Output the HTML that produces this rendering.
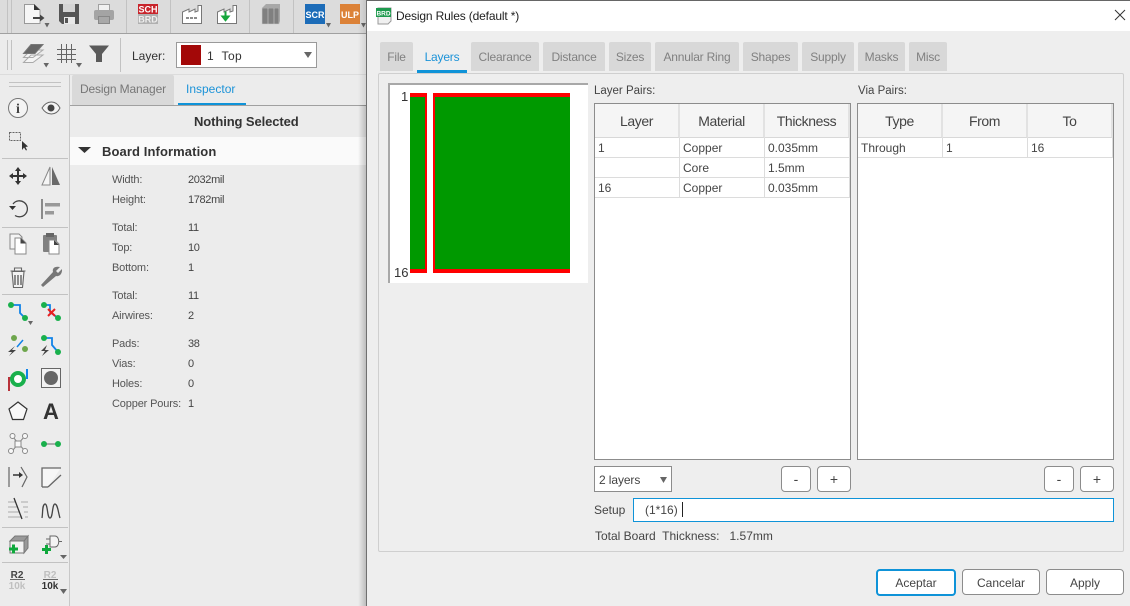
<!DOCTYPE html>
<html><head><meta charset="utf-8"><style>
html,body{margin:0;padding:0;width:1130px;height:606px;overflow:hidden;background:#ececec;font-family:"Liberation Sans",sans-serif;font-size:12px;color:#3a3a3a}
.a{position:absolute;box-sizing:border-box}
.t{position:absolute;white-space:nowrap;line-height:14px}
.tab{position:absolute;top:42px;height:29px;background:#d8d8d8;color:#808080;text-align:center;line-height:30px;border-radius:2px 2px 0 0;letter-spacing:-.2px}
.h{position:absolute;top:104px;height:34px;background:#f5f5f5;border-right:2px solid #e2e2e2;border-bottom:1px solid #d8d8d8;text-align:center;line-height:35px;font-size:14px;color:#444;box-sizing:border-box;letter-spacing:-.4px}
.c{position:absolute;height:20px;border-right:1px solid #dcdcdc;border-bottom:1px solid #dcdcdc;line-height:20px;padding-left:3px;box-sizing:border-box;color:#444;background:#fff}
.b{position:absolute;background:#fff;border:1px solid #8c8c8c;border-radius:4px;text-align:center;line-height:25px;box-sizing:border-box;color:#444;height:26px;top:466px;font-size:14px}
.k{position:absolute;left:112px;font-size:11px;line-height:14px;color:#555;letter-spacing:-.15px}
.v{position:absolute;left:188px;font-size:11px;line-height:14px;color:#444;letter-spacing:-.35px}
</style></head><body>
<div class="a" style="left:0;top:0;width:366px;height:33px;background:#dcdcdc"></div>
<div class="a" style="left:0;top:33px;width:366px;height:1px;background:#a0a0a0"></div>
<div class="a" style="left:0;top:74px;width:366px;height:1px;background:#dcdcdc"></div>
<div class="a" style="left:69px;top:75px;width:1px;height:531px;background:#c8c8c8"></div>
<div class="a" style="left:72px;top:75px;width:102px;height:30px;background:#d9d9d9;border-radius:2px 2px 0 0"></div>
<div class="t" style="left:80px;top:82px;color:#777;letter-spacing:-.15px">Design Manager</div>
<div class="t" style="left:186px;top:82px;color:#1c93d8;letter-spacing:0">Inspector</div>
<div class="a" style="left:178px;top:103px;width:68px;height:3px;background:#0f93d8"></div>
<div class="a" style="left:70px;top:105px;width:296px;height:1px;background:#a0a0a0"></div>
<div class="t" style="left:194px;top:115px;font-weight:bold;font-size:13px;color:#333;letter-spacing:-.1px">Nothing Selected</div>
<div class="a" style="left:70px;top:137px;width:296px;height:28px;background:#fafafa"></div>
<div class="t" style="left:102px;top:145px;font-weight:bold;font-size:13px;color:#333;letter-spacing:.1px">Board Information</div>
<div class="k" style="top:173px">Width:</div><div class="v" style="top:173px">2032mil</div>
<div class="k" style="top:193px">Height:</div><div class="v" style="top:193px">1782mil</div>
<div class="k" style="top:221px">Total:</div><div class="v" style="top:221px">11</div>
<div class="k" style="top:241px">Top:</div><div class="v" style="top:241px">10</div>
<div class="k" style="top:261px">Bottom:</div><div class="v" style="top:261px">1</div>
<div class="k" style="top:289px">Total:</div><div class="v" style="top:289px">11</div>
<div class="k" style="top:309px">Airwires:</div><div class="v" style="top:309px">2</div>
<div class="k" style="top:337px">Pads:</div><div class="v" style="top:337px">38</div>
<div class="k" style="top:357px">Vias:</div><div class="v" style="top:357px">0</div>
<div class="k" style="top:377px">Holes:</div><div class="v" style="top:377px">0</div>
<div class="k" style="top:397px">Copper Pours:</div><div class="v" style="top:397px">1</div>

<!-- layer combo -->
<div class="t" style="left:132px;top:49px;color:#333">Layer:</div>
<div class="a" style="left:176px;top:42px;width:141px;height:26px;background:#fff;border:1px solid #9a9a9a"></div>
<div class="a" style="left:181px;top:45px;width:20px;height:20px;background:#a30808"></div>
<div class="t" style="left:207px;top:49px;color:#333;letter-spacing:.4px">1&nbsp;&nbsp;Top</div>

<svg class="a" style="left:0;top:0" width="366" height="606" viewBox="0 0 366 606" fill="none">
<!-- separators -->
<g stroke="#c2c2c2">
<path d="M7.500 0V33M11.500 0V33M126.500 0V33M170.500 0V33M249.500 0V33M293.500 0V33"/>
<path d="M7.500 40V70M11.500 40V70M120.500 38V72"/>
<path d="M9 82.500H61M9 86.500H61"/>
<path d="M2 158.500H68M2 227.500H68M2 294.500H68M2 527.500H68M2 562.500H68"/>
</g>
<!-- new file -->
<path d="M24.500 4.500H34L40 10V23.500H24.500Z" fill="#f6f6f6" stroke="#999"/><path d="M34 4L40 10H34Z" fill="#333"/><path d="M33 18H41" stroke="#444" stroke-width="2"/><path d="M40 14.500L44.500 18L40 21.500Z" fill="#444"/>
<path d="M44.500 23H49.500L47 27.500Z" fill="#666"/>
<!-- save -->
<path d="M59 4H79V24H62L59 21Z" fill="#555"/><rect x="63" y="4" width="12" height="8" fill="#d4d4d4"/><rect x="64" y="17" width="11" height="7" fill="#e8e8e8"/><rect x="65" y="18" width="3" height="5" fill="#555"/>
<!-- print -->
<rect x="98.500" y="4.500" width="11" height="7" fill="#f0f0f0" stroke="#a0a0a0"/><rect x="94" y="10" width="20" height="10" rx="2" fill="#a4a4a4"/><rect x="98.500" y="16.500" width="11" height="7" fill="#ececec" stroke="#888"/><rect x="99" y="17" width="10" height="6" fill="#a8a8a8"/>
<!-- SCH BRD -->
<rect x="138" y="4" width="20" height="10" fill="#c8242b"/><rect x="138" y="14" width="20" height="10" fill="#b0b0b0"/>
<text x="148" y="12.500" text-anchor="middle" font-size="9" font-weight="bold" fill="#fff" font-family="Liberation Sans">SCH</text>
<text x="148" y="22.500" text-anchor="middle" font-size="9" font-weight="bold" fill="#eee" font-family="Liberation Sans">BRD</text>
<!-- factories -->
<path d="M182.500 23.500V12L189 9V12L195 9V12L198 11V5.500H201.500V23.500Z" fill="#fff" stroke="#777"/><path d="M186 18H198" stroke="#666" stroke-width="1.500" stroke-dasharray="3 1"/>
<path d="M217.500 23.500V12L224 9V12L230 9V12L233 11V5.500H236.500V23.500Z" fill="#fff" stroke="#777"/><path d="M225 12V16H221.500L225.500 21L229.500 16H226V12Z" fill="#16a63c" stroke="#16a63c"/>
<!-- books -->
<path d="M262 8H268V24H262ZM268 8H274V24H268ZM274 8H279V24H274Z" fill="#808080" stroke="#ccc" stroke-width=".6"/><path d="M262 8L266 4H280L279 8ZM279 8L280 4V21L279 24Z" fill="#a8a8a8"/>
<!-- SCR ULP -->
<rect x="305" y="4" width="20" height="20" fill="#1c6cb8"/><rect x="340" y="4" width="20" height="20" fill="#dc8238"/>
<text x="315" y="18" text-anchor="middle" font-size="9" font-weight="bold" fill="#fff" font-family="Liberation Sans">SCR</text>
<text x="350" y="18" text-anchor="middle" font-size="9" font-weight="bold" fill="#fff" font-family="Liberation Sans">ULP</text>
<path d="M326 23H331L328.500 27.500ZM361 23H366L363.500 27.500Z" fill="#666"/>
<!-- layers, grid, funnel -->
<path d="M23.500 62.500L31 55H43L33 62.500ZM23.500 57.500L31 50H43L33 57.500Z" fill="#f4f4f4" stroke="#aaa"/><path d="M23.500 53.500L31 44.500H43L35 53.500Z" fill="#666" stroke="#777"/>
<path d="M43.500 63H49L46.200 67.500Z" fill="#666"/>
<path d="M61.500 44V63M66.500 44V63M71.500 44V63M57 49.500H76M57 54.500H76M57 59.500H76" stroke="#666"/>
<path d="M76 63H82L79 67.500Z" fill="#666"/>
<path d="M89 45.500H109L102 54V62H96V54Z" fill="#5a5a5a"/>
<path d="M304 52H312L308 58Z" fill="#666"/>
<!-- triangle inspector -->
<path d="M78 147H91L84.500 153Z" fill="#333"/>
<!-- info, eye -->
<circle cx="18" cy="108" r="9.500" fill="#f4f4f4" stroke="#777"/><text x="18" y="113" text-anchor="middle" font-size="14" font-weight="bold" fill="#444" font-family="Liberation Serif">i</text>
<path d="M42 108C47 100 56 100 60 108C56 116 47 116 42 108Z" fill="#f4f4f4" stroke="#666"/><circle cx="51" cy="108" r="3.500" fill="#444"/>
<!-- select -->
<rect x="9.500" y="132.500" width="11" height="8" stroke="#666" stroke-dasharray="2 1"/><path d="M22 141V150L24 147.500L26 150.500L27 150L25.500 147L28 146.500Z" fill="#333"/>
<!-- move -->
<path d="M18 167L21 171H19V175H23V173L27 176L23 179V177H19V181H21L18 185L15 181H17V177H13V179L9 176L13 173V175H17V171H15Z" fill="#333"/>
<!-- mirror -->
<path d="M50 167V185H42Z" fill="#f5f5f5" stroke="#888"/><path d="M52 167L60 185H52Z" fill="#6a6a6a"/>
<!-- rotate -->
<path d="M13 204A8 8 0 1 1 15 215.500" stroke="#444" stroke-width="1.300"/><path d="M9 206H16L12.500 210Z" fill="#333"/>
<!-- align -->
<path d="M42 199V219" stroke="#555" stroke-width="1.300"/><rect x="45" y="203" width="15" height="3.500" fill="#999"/><rect x="45" y="211" width="9" height="3.500" fill="#999"/>
<!-- copy -->
<path d="M10 234H19L22 237V249H10Z" fill="#f4f4f4" stroke="#888"/><path d="M15 238H21L26 243V254H15Z" fill="#fff" stroke="#888"/><path d="M20.500 238L26 243.500H20.500Z" fill="#444"/>
<!-- paste -->
<rect x="43" y="235" width="14" height="17" rx="1" fill="#808080"/><rect x="46" y="233" width="8" height="4" fill="#666"/><path d="M49 240H55L59 244V254H49Z" fill="#fff" stroke="#888"/><path d="M54 240L59 245H54Z" fill="#444"/>
<!-- trash -->
<path d="M10.500 271H25.500M14.500 271V268H21.500V271M12 271.500L13.500 287.500H22.500L24 271.500Z" stroke="#666" stroke-width="1.100" fill="#f2f2f2"/><path d="M15 275V285M18 275V285M21 275V285" stroke="#555" stroke-width="1.300"/>
<!-- wrench -->
<path d="M43 287L41 285L53 272C52 268 55 266 60 267L56 271L58 273L62 269C62.500 274 59 277 56 276Z" fill="#777"/>
<!-- route -->
<path d="M11 305H20V313L25 318" stroke="#1083e8" stroke-width="1.800"/><circle cx="11" cy="305" r="3" fill="#19b04c"/><circle cx="25" cy="318" r="3" fill="#19b04c"/><path d="M28 321H33L30.500 325Z" fill="#666"/>
<path d="M44 305H50V312L58 318" stroke="#1083e8" stroke-width="1.800"/><circle cx="44" cy="305" r="3" fill="#19b04c"/><circle cx="58" cy="318" r="3" fill="#19b04c"/><path d="M48 309L55 316M55 309L48 316" stroke="#e82020" stroke-width="2"/>
<!-- fanout / autoroute -->
<circle cx="14" cy="338" r="3" fill="#6ea64c"/><circle cx="25" cy="349" r="3" fill="#6ea64c"/><path d="M17 347L23 340" stroke="#1083e8" stroke-width="1.500"/>
<path d="M15 346L8 352H12L9 356L16 350H12Z" fill="#444"/>
<path d="M44 338H52V345L58 352" stroke="#1083e8" stroke-width="1.800"/><circle cx="44" cy="338" r="3" fill="#19b04c"/><circle cx="58" cy="352" r="3" fill="#19b04c"/><path d="M47 345L41 351H45L42 356L49 350H45Z" fill="#444"/>
<!-- signal circle -->
<path d="M9 391V378H13" stroke="#b8323a" stroke-width="2"/><circle cx="18" cy="379" r="6" stroke="#19b04c" stroke-width="4" fill="#fff"/><path d="M27 369V379" stroke="#1083e8" stroke-width="2"/>
<!-- hole -->
<rect x="41.500" y="368.500" width="19" height="19" fill="#f2f2f2" stroke="#666"/><circle cx="51" cy="378" r="7" fill="#666"/>
<!-- polygon, A -->
<path d="M18 402L27 409L23.500 419.500H12.500L9 409Z" fill="#f8f8f8" stroke="#333" stroke-width="1.200"/>
<text x="51" y="419" text-anchor="middle" font-size="22" font-weight="bold" fill="#333" font-family="Liberation Sans">A</text>
<!-- net -->
<path d="M13 437L24 450M24 437L13 450" stroke="#888"/><rect x="15" y="441" width="6" height="6" fill="#f8f8f8" stroke="#888"/><g fill="#f8f8f8" stroke="#888"><circle cx="12.500" cy="436" r="2.500"/><circle cx="25" cy="436" r="2.500"/><circle cx="11" cy="451" r="2.500"/><circle cx="25" cy="451" r="2.500"/></g>
<!-- line -->
<path d="M44 444H58" stroke="#aaa" stroke-width="2"/><circle cx="44" cy="444" r="3" fill="#19b04c"/><circle cx="58" cy="444" r="3" fill="#19b04c"/>
<!-- smash -->
<path d="M9 467V487" stroke="#666" stroke-width="1.200"/><path d="M13 475H20" stroke="#333" stroke-width="1.500"/><path d="M19 472L23 475L19 478Z" fill="#333"/><path d="M21 467L27 477L22 487" stroke="#666" stroke-width="1.200"/>
<!-- miter -->
<path d="M41.500 467.500H61L48 487.500H41.500Z" fill="#f6f6f6"/><path d="M42 487V468H61M48 487L61 475" stroke="#666" stroke-width="1.300"/><path d="M42 487H48" stroke="#666" stroke-width="1.300"/>
<!-- split -->
<path d="M8 502H16M8 507H18M8 512H20M8 517H22M21 502H28M23 507H28M24 512H28M25 517H28" stroke="#aaa"/><path d="M14 498L22 519" stroke="#333" stroke-width="1.300"/>
<!-- meander -->
<path d="M42 518C43 512 42 505 45 504C48 504 47 518 50 518C53 518 52 504 55 504C58 505 58 512 60 518" stroke="#444" stroke-width="1.300"/>
<!-- add package -->
<path d="M10 541L15 536H28L24 541ZM24 541L28 536V548L24 553Z" fill="#999" stroke="#777"/><path d="M10 541H24V553H10Z" fill="#f2f2f2" stroke="#777"/><path d="M9 549H18M13.500 544.500V553.500" stroke="#0fa83c" stroke-width="3"/>
<!-- add gate -->
<path d="M50 536H55C60 536 60 547 55 547H50ZM50 539H46M50 544H46M59 541.500H62" stroke="#666" fill="#f4f4f4"/><path d="M42 549.500H51M46.500 545V554" stroke="#0fa83c" stroke-width="3"/>
<path d="M60 555H67L63.500 559Z" fill="#666"/>
<!-- R2 -->
<text x="17" y="578" text-anchor="middle" font-size="10" font-weight="bold" fill="#444" font-family="Liberation Sans">R2</text><path d="M10 579.500H25" stroke="#666"/><text x="17" y="589" text-anchor="middle" font-size="10" font-weight="bold" fill="#c0c0c0" font-family="Liberation Sans">10k</text>
<text x="50" y="578" text-anchor="middle" font-size="10" font-weight="bold" fill="#bfbfbf" font-family="Liberation Sans">R2</text><path d="M43 579.500H58" stroke="#666"/><text x="50" y="589" text-anchor="middle" font-size="10" font-weight="bold" fill="#333" font-family="Liberation Sans">10k</text>
<path d="M60 589H67L63.500 594Z" fill="#666"/>
</svg>

<!-- shadow -->
<div class="a" style="left:358px;top:105px;width:8px;height:501px;background:linear-gradient(to right,rgba(0,0,0,0),rgba(0,0,0,.2))"></div>
<div class="a" style="left:358px;top:0;width:8px;height:105px;background:linear-gradient(to right,rgba(0,0,0,0),rgba(0,0,0,.1))"></div>

<!-- dialog -->
<div class="a" style="left:366px;top:0;width:764px;height:606px;background:#eee;border-left:1px solid #707070"></div>
<div class="a" style="left:367px;top:0;width:763px;height:31px;background:#fff;border-top:1px solid #666"></div>
<svg class="a" style="left:376px;top:7px" width="18" height="18" viewBox="0 0 18 18"><path d="M2 1H15V14L12 17H2Z" fill="#f0f0f0" stroke="#999"/><rect x="0" y="1" width="15" height="9" fill="#1e9a4e"/><text x="7.500" y="8.500" text-anchor="middle" font-size="6.500" font-weight="bold" fill="#fff" font-family="Liberation Sans">BRD</text></svg>
<div class="t" style="left:396px;top:9px;color:#222;letter-spacing:-.15px">Design Rules (default *)</div>
<svg class="a" style="left:1114px;top:9px" width="12" height="12"><path d="M1 1L11 11M11 1L1 11" stroke="#333" stroke-width="1"/></svg>

<div class="tab" style="left:380px;width:33px">File</div>
<div class="tab" style="left:417px;width:50px;background:#eee;color:#1c93d8">Layers</div>
<div class="a" style="left:417px;top:70px;width:50px;height:3px;background:#0f93d8"></div>
<div class="tab" style="left:471px;width:68px">Clearance</div>
<div class="tab" style="left:543px;width:62px">Distance</div>
<div class="tab" style="left:609px;width:42px">Sizes</div>
<div class="tab" style="left:655px;width:84px">Annular Ring</div>
<div class="tab" style="left:743px;width:55px">Shapes</div>
<div class="tab" style="left:802px;width:52px">Supply</div>
<div class="tab" style="left:858px;width:47px">Masks</div>
<div class="tab" style="left:909px;width:38px">Misc</div>
<div class="a" style="left:378px;top:73px;width:746px;height:479px;border:1px solid #cfcfcf;border-radius:2px"></div>

<!-- preview -->
<div class="a" style="left:388px;top:83px;width:200px;height:200px;background:#fff;border-left:2px solid #a8a8a8;border-top:2px solid #a8a8a8"></div>
<div class="a" style="left:410px;top:93px;width:17px;height:180px;background:#f00"></div>
<div class="a" style="left:410px;top:97px;width:15px;height:172px;background:#009900"></div>
<div class="a" style="left:433px;top:93px;width:137px;height:180px;background:#f00"></div>
<div class="a" style="left:435px;top:97px;width:135px;height:172px;background:#009900"></div>
<div class="t" style="left:401px;top:90px;color:#333;font-size:13px">1</div>
<div class="t" style="left:394px;top:266px;color:#333;font-size:13px">16</div>

<div class="t" style="left:594px;top:84px;font-size:11.500px;color:#444">Layer Pairs:</div>
<div class="t" style="left:858px;top:84px;font-size:11.500px;color:#444">Via Pairs:</div>

<!-- layer table -->
<div class="a" style="left:594px;top:103px;width:257px;height:357px;background:#fff;border:1px solid #8c8c8c"></div>
<div class="h" style="left:595px;width:85px">Layer</div>
<div class="h" style="left:680px;width:85px">Material</div>
<div class="h" style="left:765px;width:85px">Thickness</div>
<div class="c" style="left:595px;top:138px;width:85px">1</div><div class="c" style="left:680px;top:138px;width:85px">Copper</div><div class="c" style="left:765px;top:138px;width:85px">0.035mm</div>
<div class="c" style="left:595px;top:158px;width:85px"></div><div class="c" style="left:680px;top:158px;width:85px">Core</div><div class="c" style="left:765px;top:158px;width:85px">1.5mm</div>
<div class="c" style="left:595px;top:178px;width:85px">16</div><div class="c" style="left:680px;top:178px;width:85px">Copper</div><div class="c" style="left:765px;top:178px;width:85px">0.035mm</div>

<!-- via table -->
<div class="a" style="left:857px;top:103px;width:257px;height:357px;background:#fff;border:1px solid #8c8c8c"></div>
<div class="h" style="left:858px;width:85px">Type</div>
<div class="h" style="left:943px;width:85px">From</div>
<div class="h" style="left:1028px;width:85px">To</div>
<div class="c" style="left:858px;top:138px;width:85px">Through</div><div class="c" style="left:943px;top:138px;width:85px">1</div><div class="c" style="left:1028px;top:138px;width:85px">16</div>

<!-- controls -->
<div class="a" style="left:594px;top:466px;width:78px;height:26px;background:#fff;border:1px solid #8c8c8c"></div>
<div class="t" style="left:599px;top:473px;color:#444;letter-spacing:-.1px">2 layers</div>
<svg class="a" style="left:660px;top:477px" width="7" height="6"><path d="M0 0H7L3.500 6Z" fill="#666"/></svg>
<div class="b" style="left:781px;width:30px">-</div>
<div class="b" style="left:817px;width:34px">+</div>
<div class="b" style="left:1044px;width:30px">-</div>
<div class="b" style="left:1080px;width:34px">+</div>
<div class="t" style="left:594px;top:503px;color:#444">Setup</div>
<div class="a" style="left:633px;top:498px;width:481px;height:24px;background:#fff;border:1px solid #0f93d8"></div>
<div class="t" style="left:645px;top:503px;color:#444">(1*16)</div>
<div class="a" style="left:682px;top:502px;width:1px;height:15px;background:#222"></div>
<div class="t" style="left:595px;top:529px;color:#444;letter-spacing:0">Total Board&nbsp; Thickness:&nbsp;&nbsp; 1.57mm</div>

<div class="a" style="left:876px;top:569px;width:80px;height:27px;background:#fff;border:2px solid #0f93d8;border-radius:4px;text-align:center;line-height:24px;color:#444">Aceptar</div>
<div class="a" style="left:962px;top:569px;width:78px;height:26px;background:#fff;border:1px solid #8c8c8c;border-radius:4px;text-align:center;line-height:26px;color:#444">Cancelar</div>
<div class="a" style="left:1046px;top:569px;width:78px;height:26px;background:#fff;border:1px solid #8c8c8c;border-radius:4px;text-align:center;line-height:26px;color:#444">Apply</div>
</body></html>
